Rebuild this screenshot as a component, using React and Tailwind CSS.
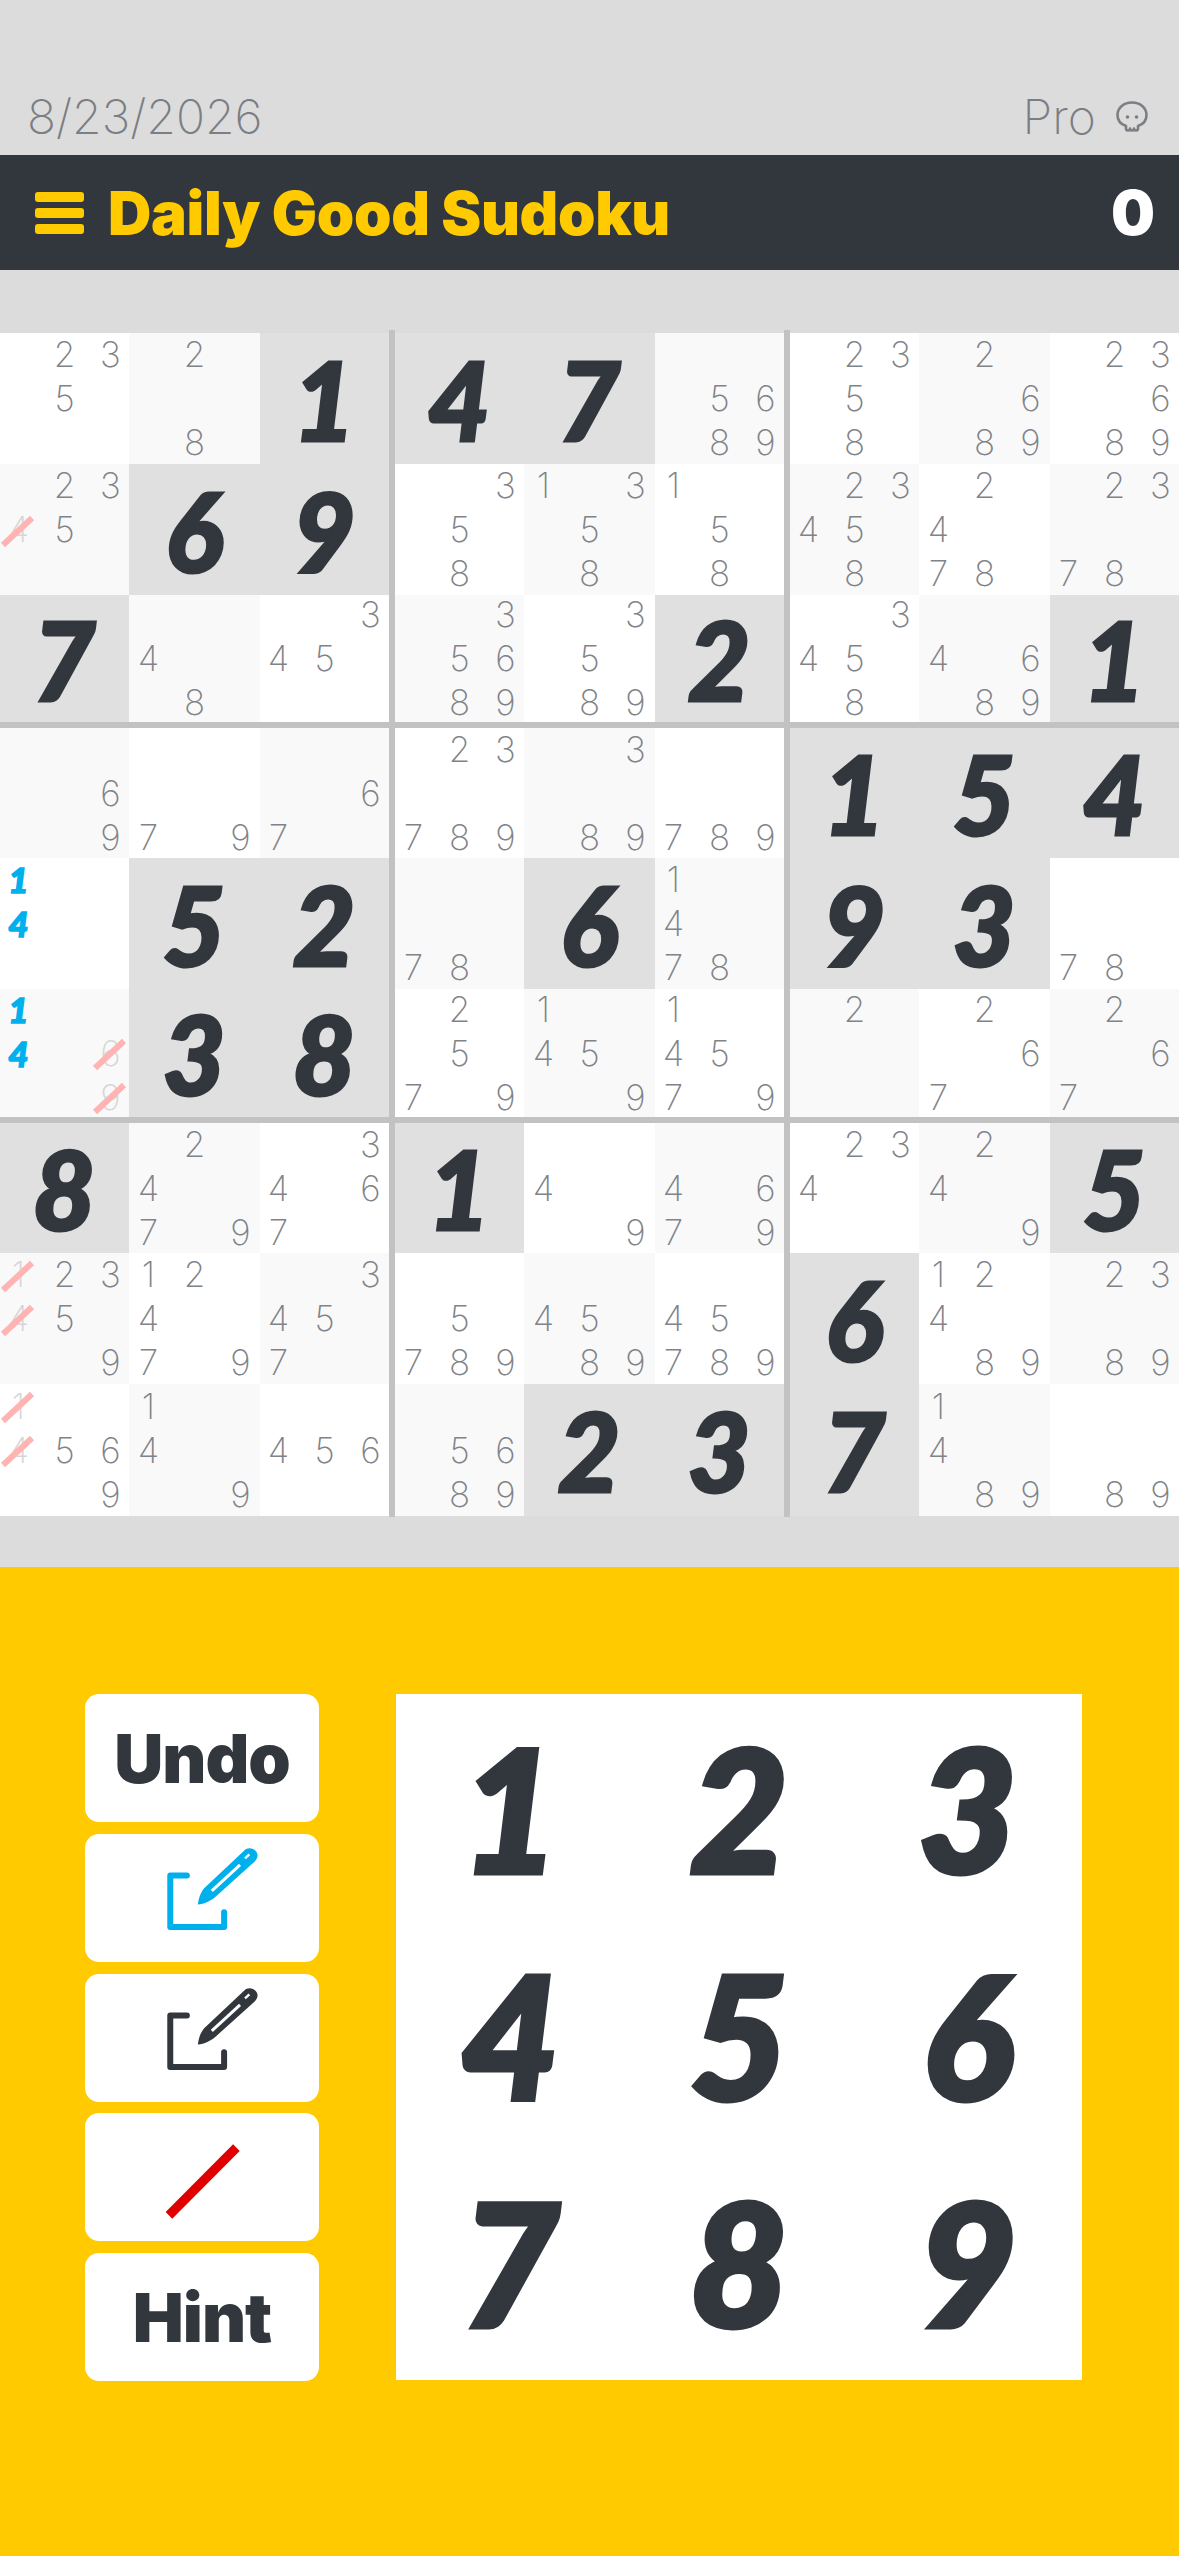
const board = [
  [
    ['235', '28', '=1', '=4', '=7', '5689', '2358', '2689', '23689'],
    ['235-4', '=6', '=9', '358', '1358', '158', '23458', '2478', '2378'],
    ['=7', '48', '345', '35689', '3589', '=2', '3458', '4689', '=1'],
  ],
  [
    ['69', '79', '67', '23789', '389', '789', '=1', '=5', '=4'],
    ['+14', '=5', '=2', '78', '=6', '1478', '=9', '=3', '78'],
    ['+14-69', '=3', '=8', '2579', '1459', '14579', '2', '267', '267'],
  ],
  [
    ['=8', '2479', '3467', '=1', '49', '4679', '234', '249', '=5'],
    ['2359-14', '12479', '3457', '5789', '4589', '45789', '=6', '12489', '2389'],
    ['569-14', '149', '456', '5689', '=2', '=3', '=7', '1489', '89'],
  ],
]

const boxRows = [
  'grid-rows-[131px_131px_127px]',
  'grid-rows-[130px_131px_128px]',
  'grid-rows-[130px_131px_132px]',
]

// one pencil mark, optionally struck through in pink
const Note = ({ n, blue, crossed }) => {
  const row = Math.floor((n - 1) / 3) + 1
  const col = ((n - 1) % 3) + 1
  return (
    <span
      className={`relative flex items-center justify-center leading-none ${
        blue
          ? "font-['Lato',sans-serif] text-[35px] font-black text-[#00b0ec] italic [-webkit-text-stroke:1.5px_#00b0ec]"
          : crossed
            ? "font-['Inter',sans-serif] text-[35px] font-extralight text-[#d6d6d6]"
            : "font-['Inter',sans-serif] text-[35px] font-extralight text-[#808388]"
      }`}
      style={{ gridRow: row, gridColumn: col }}
    >
      {n}
      {crossed && (
        <svg className="absolute top-[-2px] left-[-5px] h-[44px] w-[46px]" viewBox="0 0 46 44">
          <line x1="8" y1="36" x2="37" y2="9" stroke="#ffb3b3" strokeWidth="6" />
        </svg>
      )}
    </span>
  )
}

const Cell = ({ value, shaded }) => {
  if (value[0] === '=') {
    return (
      <div className="flex items-center justify-center bg-[#e0e0e0] pr-[1px] font-['Lato',sans-serif] text-[108px] leading-none font-black text-[#32363d] italic [-webkit-text-stroke:3px_#32363d]">
        {value[1]}
      </div>
    )
  }

  const blue = value[0] === '+'
  const [marks, struck = ''] = value.replace('+', '').split('-')
  const all = [...marks].map((d) => ({ n: Number(d), crossed: false }))
  const off = [...struck].map((d) => ({ n: Number(d), crossed: true }))

  return (
    <div className={`grid grid-cols-[repeat(3,38px)] grid-rows-[repeat(3,38px)] content-center justify-center gap-x-[8px] gap-y-[6px] ${shaded ? 'bg-[#f9f9f9]' : 'bg-white'}`}>
      {all.map(({ n }) => (
        <Note key={n} n={n} blue={blue} />
      ))}
      {off.map(({ n }) => (
        <Note key={n} n={n} crossed />
      ))}
    </div>
  )
}

const Board = () => (
  <div className="relative grid grid-cols-[389px_389px_389px] grid-rows-[389px_389px_393px] gap-[6px] bg-[#c2c2c2]">
    {board.flatMap((band, bandIdx) =>
      [0, 1, 2].map((boxIdx) => (
        <div key={`${bandIdx}-${boxIdx}`} className={`grid grid-cols-[129px_131px_129px] ${boxRows[bandIdx]}`}>
          {[0, 1, 2].flatMap((r) =>
            [0, 1, 2].map((c) => {
              const rowAbs = bandIdx * 3 + r
              const colAbs = boxIdx * 3 + c
              return <Cell key={c + r * 3} value={band[r][colAbs]} shaded={(rowAbs + colAbs) % 2 === 1} />
            })
          )}
        </div>
      ))
    )}
    {/* the vertical dividers poke out a little past the board */}
    <div className="absolute top-[-3px] bottom-[-1px] left-[389px] w-[6px] bg-[#c2c2c2]" />
    <div className="absolute top-[-3px] bottom-[-1px] left-[784px] w-[6px] bg-[#c2c2c2]" />
  </div>
)

const SkullIcon = () => (
  <svg className="h-[32px] w-[32px]" viewBox="0 0 32 32" fill="none" stroke="#7b7e83" strokeWidth="2.6" strokeLinejoin="round">
    <path d="M10 25 C4 23 1.5 18.5 1.5 14 C1.5 6.5 8 1.5 16 1.5 C24 1.5 30.5 6.5 30.5 14 C30.5 18.5 28 23 22 25 V27.5 a2 2 0 0 1 -4 0 a2 2 0 0 1 -4 0 a2 2 0 0 1 -4 0 Z" />
    <circle cx="11.5" cy="16" r="1.8" fill="#7b7e83" stroke="none" />
    <circle cx="20.5" cy="16" r="1.8" fill="#7b7e83" stroke="none" />
  </svg>
)

const PencilIcon = ({ color }) => (
  <svg className="h-[103px] w-[117px]" viewBox="252 501 350 310" fill="none">
    <path d="M380 590 H330 V745 H492 V700" stroke={color} strokeWidth="18" strokeLinecap="round" strokeLinejoin="round" />
    <path
      d="M413 677 C416 655 422 640 432 628 L552 515 C562 505 578 506 587 516 C596 526 594 538 584 548 L468 652 C452 666 432 676 413 677 Z"
      fill={color}
    />
    <line x1="455" y1="636" x2="540" y2="558" stroke="white" strokeWidth="9" />
    <line x1="555" y1="538" x2="568" y2="526" stroke="white" strokeWidth="7" />
  </svg>
)

const SlashIcon = () => (
  <svg className="h-[103px] w-[117px]" viewBox="252 498 350 310">
    <line x1="326" y1="767" x2="529" y2="563" stroke="#e00000" strokeWidth="28" />
  </svg>
)

const ToolButton = ({ children }) => (
  <button className="flex h-[128px] w-[234px] items-center justify-center rounded-[14px] bg-white font-['Inter',sans-serif] text-[68px] leading-none font-black tracking-[-1px] text-[#32363d]">
    {children}
  </button>
)

export default function App() {
  return (
    <div className="flex min-h-screen flex-col bg-[#dcdcdc]">
      {/* status line */}
      <div className="flex h-[155px] items-end justify-between pr-[28px] pb-[14px] pl-[27px] font-['Inter',sans-serif] text-[48px] leading-none font-extralight text-[#7b7e83]">
        <span>8/23/2026</span>
        <span className="flex items-center gap-[20px] pr-[3px]">
          Pro
          <SkullIcon />
        </span>
      </div>

      <header className="flex h-[115px] items-center justify-between bg-[#32363d] pr-[24px] pl-[35px]">
        <div className="flex items-center gap-[24px]">
          <div className="flex w-[49px] flex-col gap-[6px]">
            <span className="h-[10px] rounded-[3px] bg-[#ffcb00]" />
            <span className="h-[10px] rounded-[3px] bg-[#ffcb00]" />
            <span className="h-[10px] rounded-[3px] bg-[#ffcb00]" />
          </div>
          <h1 className="font-['Inter',sans-serif] text-[60px] leading-none font-black tracking-[-0.3px] text-[#ffcb00]">Daily Good Sudoku</h1>
        </div>
        <span className="font-['Inter',sans-serif] text-[62px] leading-none font-black text-white">0</span>
      </header>

      <div className="mt-[63px]">
        <Board />
      </div>

      {/* controls */}
      <div className="mt-[51px] flex flex-1 items-start gap-[77px] bg-[#ffcb00] pt-[127px] pl-[85px]">
        <div className="flex h-[687px] flex-col justify-between">
          <ToolButton>Undo</ToolButton>
          <ToolButton>
            <PencilIcon color="#00b0ec" />
          </ToolButton>
          <ToolButton>
            <PencilIcon color="#32363d" />
          </ToolButton>
          <ToolButton>
            <SlashIcon />
          </ToolButton>
          <ToolButton>Hint</ToolButton>
        </div>
        <div className="grid h-[686px] w-[686px] grid-cols-3 grid-rows-3 bg-white pb-[6px] font-['Lato',sans-serif] text-[170px] leading-none font-black text-[#32363d] italic [-webkit-text-stroke:5px_#32363d]">
          {[1, 2, 3, 4, 5, 6, 7, 8, 9].map((n) => (
            <button key={n} className="flex items-center justify-center">
              {n}
            </button>
          ))}
        </div>
      </div>
    </div>
  )
}
